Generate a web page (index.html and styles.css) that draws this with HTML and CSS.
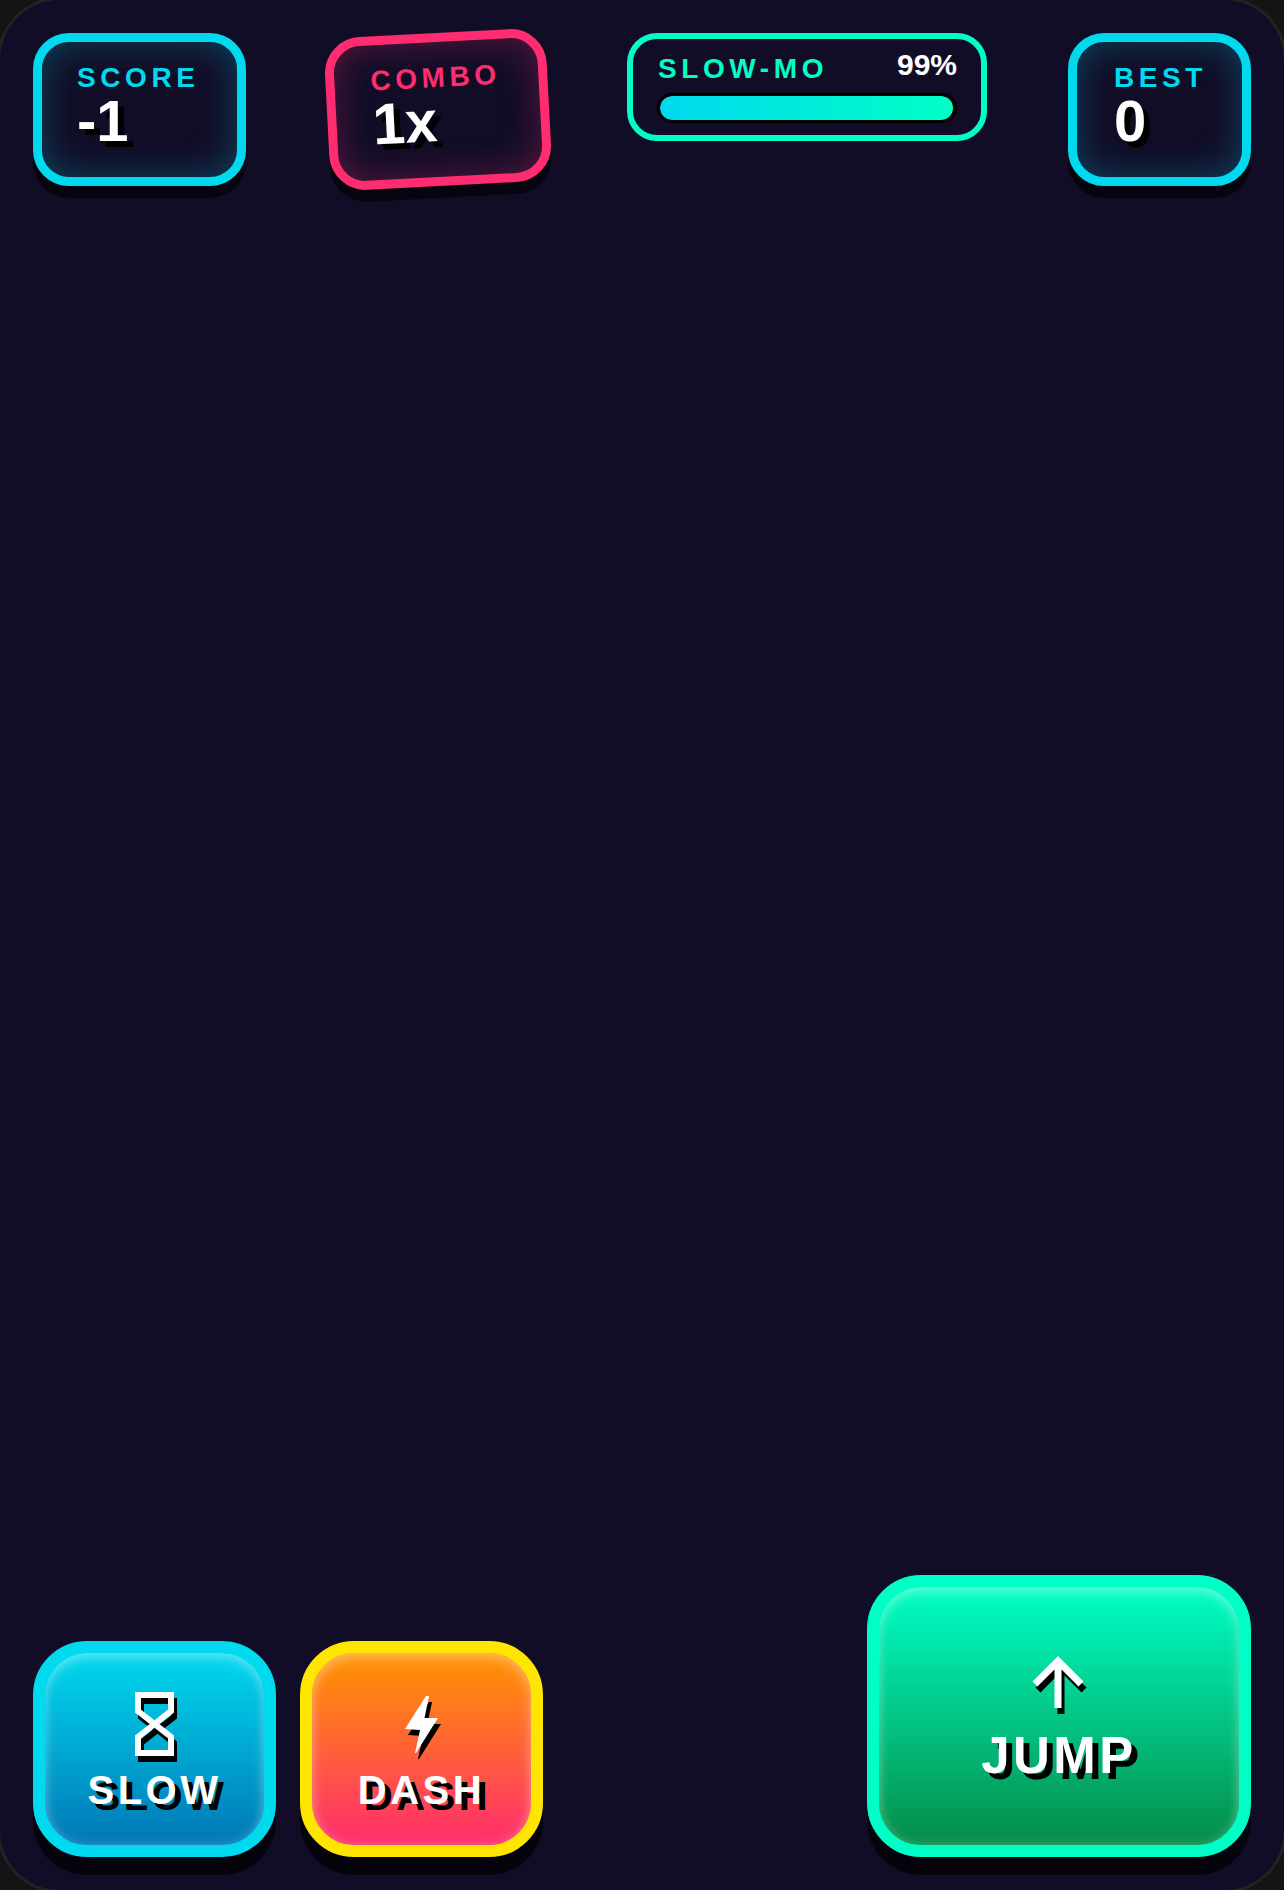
FILE: index.html
```html
<!DOCTYPE html>
<html lang="en">
<head>
	<meta charset="utf-8">
	<title>Neon runner HUD</title>
	<link rel="stylesheet" href="styles.css">
</head>
<body>

<div class="screen">
	<section class="hud">
		<div class="stat stat--score">
			<div class="stat__label">SCORE</div>
			<div class="stat__value">-1</div>
		</div>
		<div class="stat stat--combo">
			<div class="stat__label">COMBO</div>
			<div class="stat__value">1x</div>
		</div>
		<div class="meter">
			<div class="meter__head">
				<span class="meter__label">SLOW-MO</span>
				<span class="meter__value">99%</span>
			</div>
			<div class="meter__track">
				<div class="meter__fill" style="width: 99.5%"></div>
			</div>
		</div>
		<div class="stat stat--best">
			<div class="stat__label">BEST</div>
			<div class="stat__value">0</div>
		</div>
	</section>

	<section class="controls">
		<div class="controls__left">
			<button class="btn btn--slow">
				<svg class="btn__icon" width="39" height="64" viewBox="0 0 39 64">
					<path d="M3 3H36V19L3 45V61H36V45L3 19Z" fill="none" stroke="#fff" stroke-width="6"/>
				</svg>
				<span class="btn__text">SLOW</span>
			</button>
			<button class="btn btn--dash">
				<svg class="btn__icon" width="33" height="64" viewBox="0 0 33 64">
					<path d="M21 4H24L19.5 26H33L11 61H10L15 38L0 37Z" fill="#fff"/>
				</svg>
				<span class="btn__text">DASH</span>
			</button>
		</div>
		<button class="btn btn--jump">
			<svg class="btn__icon" width="51" height="52" viewBox="1.5 0 51 52">
				<path d="M2.5 28L25.5 5L48.5 28M25.5 8V52" fill="none" stroke="#fff" stroke-width="7"/>
			</svg>
			<span class="btn__text">JUMP</span>
		</button>
	</section>
</div>

</body>
</html>
```

FILE: styles.css
```css
* {
	box-sizing: border-box;
}

html, body {
	margin: 0;
	background: #141414;
}

body {
	font-family: "Liberation Sans", "DejaVu Sans", sans-serif;
	font-weight: bold;
	color: #fff;
}

.screen {
	width: 1284px;
	height: 1890px;
	padding: 33px;
	border-radius: 60px;
	background: #110d27;
	box-shadow: 0 0 0 3px #222;
	display: flex;
	flex-direction: column;
	justify-content: space-between;
	overflow: hidden;
}

.hud {
	display: flex;
	justify-content: space-between;
	align-items: flex-start;
}

.stat {
	--accent: #00d9ee;
	--glow: rgba(0, 217, 238, 0.28);
	height: 153px;
	padding: 20px 36px 0;
	border: 9px solid var(--accent);
	border-radius: 36px;
	box-shadow: 0 12px 0 rgba(0, 0, 0, 0.6), inset 0 0 36px var(--glow);
}

.stat--score {
	width: 213px;
	padding-left: 35px;
}

.stat--best {
	width: 183px;
	padding-left: 37px;
}

.stat--combo {
	--accent: #ff2d6f;
	--glow: rgba(255, 45, 111, 0.3);
	width: 222px;
	margin-right: -3px;
	transform: rotate(-3deg);
}

.stat__label {
	font-size: 28px;
	letter-spacing: 4.6px;
	color: var(--accent);
}

.stat__value {
	font-size: 58px;
	line-height: 56px;
	margin-top: -1px;
	text-shadow: 6px 6px 0 #000;
}

.meter {
	width: 360px;
	height: 108px;
	padding: 13px 24px 0;
	border: 6px solid #00ffc6;
	border-radius: 30px;
}

.meter__head {
	display: flex;
	justify-content: space-between;
	align-items: center;
	height: 36px;
	margin-bottom: 5px;
}

.meter__label {
	font-size: 28px;
	letter-spacing: 4.6px;
	color: #00ffc6;
	margin: -2px 0 0 1px;
}

.meter__value {
	font-size: 30px;
	margin-top: -10px;
}

.meter__track {
	height: 30px;
	border: 3px solid #000;
	border-radius: 15px;
	background: #000;
	overflow: hidden;
}

.meter__fill {
	height: 100%;
	border-radius: 12px;
	background: linear-gradient(90deg, #00d9ee, #00ffc6);
}

.controls {
	display: flex;
	justify-content: space-between;
	align-items: flex-end;
}

.controls__left {
	display: flex;
	gap: 24px;
}

.btn {
	--rim: #00d9ee;
	width: 243px;
	height: 216px;
	padding: 6px 0 0;
	border: 12px solid var(--rim);
	border-radius: 54px;
	font-family: inherit;
	font-weight: bold;
	color: #fff;
	display: flex;
	flex-direction: column;
	align-items: center;
	justify-content: center;
	text-shadow: 6px 6px 0 #000;
	box-shadow: 0 18px 0 rgba(0, 0, 0, 0.7), inset 0 6px 12px rgba(255, 255, 255, 0.25), inset 0 0 12px rgba(255, 255, 255, 0.2);
}

.btn--slow {
	background: linear-gradient(180deg, #00d9ee, #0077b6);
}

.btn--dash {
	--rim: #ffe600;
	background: linear-gradient(180deg, #ff9500, #ff2d6f);
}

.btn--jump {
	--rim: #00ffc6;
	width: 384px;
	height: 282px;
	padding-top: 9px;
	background: linear-gradient(180deg, #00ffc6, #058c46);
}

.btn__icon {
	display: block;
	margin-bottom: 11px;
	overflow: visible;
	filter: drop-shadow(3px 6px 0 #000);
}

.btn--jump .btn__icon {
	margin-bottom: 19px;
}

.btn__text {
	font-size: 40px;
	line-height: 46px;
	letter-spacing: 3.5px;
}

.btn--jump .btn__text {
	font-size: 51px;
	line-height: 58px;
	letter-spacing: 3.5px;
}
```
